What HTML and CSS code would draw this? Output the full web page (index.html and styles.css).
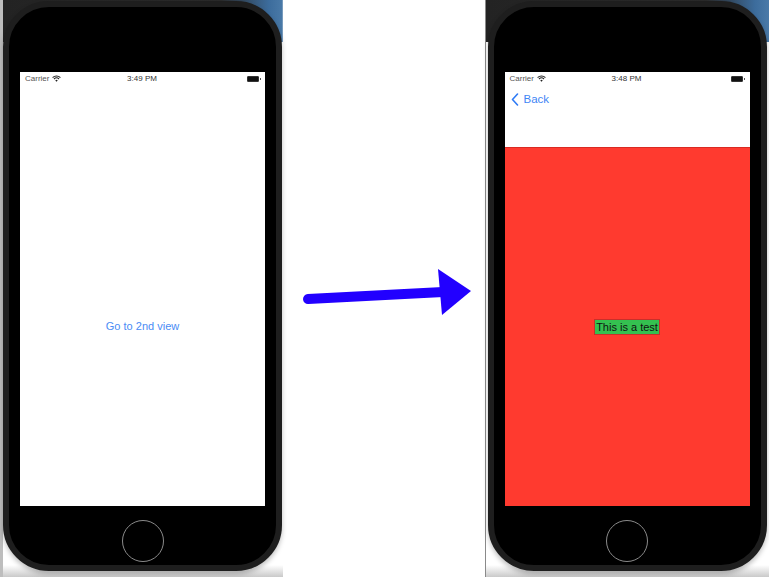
FILE: index.html
```html
<!DOCTYPE html>
<html lang="en">
<head>
  <meta charset="UTF-8">
  <title>Navigation demo</title>
  <link rel="stylesheet" href="styles.css">
</head>
<body>
  <div class="page">
    <div class="panel panel-left">
      <div class="phone">
        <div class="screen">
          <div class="status">
            <span class="carrier">Carrier
              <svg class="wifi" width="9" height="7" viewBox="0 0 9 7">
                <path d="M0.6 2.6 A5.6 5.6 0 0 1 8.4 2.6" fill="none" stroke="#222" stroke-width="1.1"/>
                <path d="M2 4 A3.6 3.6 0 0 1 7 4" fill="none" stroke="#222" stroke-width="1.1"/>
                <path d="M4.5 6.8 L3.3 5.4 A1.7 1.7 0 0 1 5.7 5.4 Z" fill="#222"/>
              </svg>
            </span>
            <span class="time">3:49 PM</span>
            <span class="battery"><i></i></span>
          </div>
          <div class="first-body">
            <span class="link">Go to 2nd view</span>
          </div>
        </div>
        <div class="home"></div>
      </div>
    </div>

    <div class="middle">
      <svg width="202" height="100" viewBox="0 0 202 100">
        <line x1="25" y1="49" x2="160" y2="42" stroke="#2200ff" stroke-width="10" stroke-linecap="round"/>
        <polygon points="155,19 159,65 188,41" fill="#2200ff"/>
      </svg>
    </div>

    <div class="panel panel-right">
      <div class="phone">
        <div class="screen">
          <div class="status">
            <span class="carrier">Carrier
              <svg class="wifi" width="9" height="7" viewBox="0 0 9 7">
                <path d="M0.6 2.6 A5.6 5.6 0 0 1 8.4 2.6" fill="none" stroke="#222" stroke-width="1.1"/>
                <path d="M2 4 A3.6 3.6 0 0 1 7 4" fill="none" stroke="#222" stroke-width="1.1"/>
                <path d="M4.5 6.8 L3.3 5.4 A1.7 1.7 0 0 1 5.7 5.4 Z" fill="#222"/>
              </svg>
            </span>
            <span class="time">3:48 PM</span>
            <span class="battery"><i></i></span>
          </div>
          <div class="navbar">
            <svg width="8" height="13" viewBox="0 0 8 13">
              <path d="M6.5 1 L1.5 6.5 L6.5 12" fill="none" stroke="#2f7bf5" stroke-width="1.6" stroke-linecap="round" stroke-linejoin="round"/>
            </svg>
            <span class="back">Back</span>
          </div>
          <div class="second-body">
            <span class="label">This is a test</span>
          </div>
        </div>
        <div class="home"></div>
      </div>
    </div>
  </div>
</body>
</html>
```

FILE: styles.css
```css
body {
  margin: 0;
  background: #fff;
  font-family: "Liberation Sans", Arial, sans-serif;
}

.page {
  display: flex;
  width: 769px;
  height: 577px;
  overflow: hidden;
}

.panel {
  background:
    linear-gradient(to right, #232323 0, #2a2a2a 78%, #3c6c9c 95%, #4a7aa8 100%) top / 100% 42px no-repeat,
    linear-gradient(to bottom, #fff 0, #fff 565px, #c9c9c9 577px);
}

.panel-left {
  width: 283px;
  box-sizing: border-box;
  border-left: 3px solid #bdbdbd;
}

.panel-right {
  width: 284px;
  border-left: 1px solid #8a8a8a;
}

.panel-left .phone { margin: 1px 0 0 0; }
.panel-right .phone { margin: 1px 0 0 2px; }

.phone {
  width: 279px;
  height: 570px;
  box-sizing: border-box;
  border: 6px solid #1e1e1e;
  border-radius: 46px;
  background: #000;
  padding: 65px 11px 0;
  display: flex;
  flex-direction: column;
  align-items: center;
  box-shadow: 0 3px 5px rgba(0,0,0,0.25);
}

.screen {
  width: 245px;
  height: 434px;
  background: #fff;
  display: flex;
  flex-direction: column;
}

.status {
  height: 13px;
  display: flex;
  align-items: center;
  justify-content: space-between;
  padding: 0 6px 0 5px;
  font-size: 8px;
  color: #555;
}

.carrier {
  width: 60px;
  display: flex;
  align-items: center;
  gap: 3px;
}

.time {
  color: #333;
}

.battery {
  width: 60px;
  display: flex;
  justify-content: flex-end;
}

.battery i {
  width: 10px;
  height: 4px;
  border: 1px solid #333;
  border-radius: 1px;
  background: #111;
  position: relative;
}

.battery i::after {
  content: "";
  position: absolute;
  right: -3px;
  top: 1px;
  width: 1px;
  height: 2px;
  background: #555;
}

.first-body {
  flex: 1;
  display: flex;
  justify-content: center;
  padding-top: 235px;
}

.link {
  color: #4a8cf5;
  font-size: 11px;
}

.navbar {
  height: 62px;
  display: flex;
  align-items: flex-start;
  gap: 5px;
  padding: 8px 0 0 6px;
  box-sizing: border-box;
}

.back {
  color: #3f86f5;
  font-size: 11.5px;
  line-height: 13px;
}

.second-body {
  flex: 1;
  background: #ff3a2f;
  border-top: 1px solid #d92a22;
  display: flex;
  justify-content: center;
  align-items: flex-start;
  padding-top: 172px;
}

.label {
  background: #34c150;
  color: #111;
  font-size: 11px;
  line-height: 14px;
  padding: 0 1px;
  outline: 1px solid #c8302a;
}

.home {
  width: 40px;
  height: 40px;
  margin-top: 14px;
  border: 1.5px solid #8a8a8a;
  border-radius: 50%;
}

.middle {
  width: 202px;
  display: flex;
  align-items: flex-start;
  padding-top: 250px;
  box-sizing: border-box;
}
```
